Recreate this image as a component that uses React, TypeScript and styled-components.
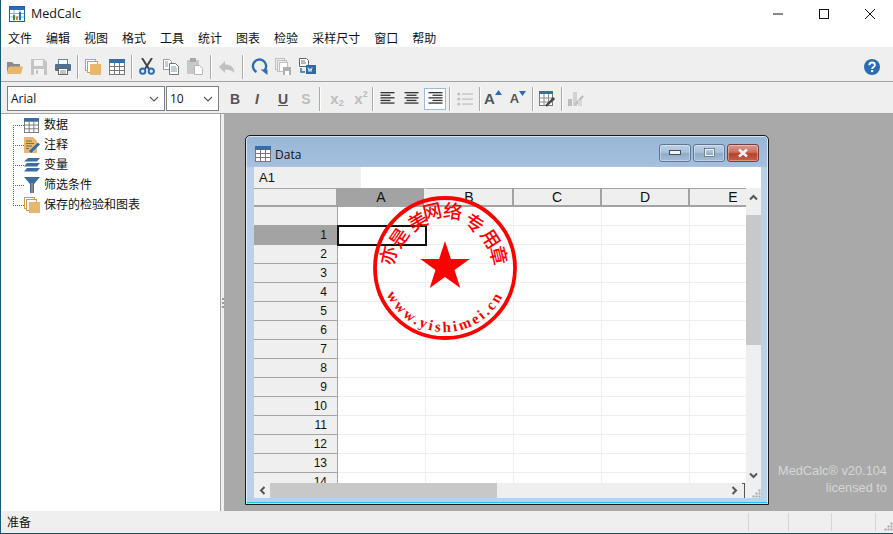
import React from 'react';
import styled, { createGlobalStyle } from 'styled-components';

const GlobalStyle = createGlobalStyle`
  html, body { margin: 0; padding: 0; background: #fff; overflow: hidden; }
  #root { width: 893px; height: 534px; }
  * { box-sizing: border-box; }
`;

const cjk = `"Noto Sans CJK SC", "Noto Sans", sans-serif`;
const arial = `"Liberation Sans", Arial, sans-serif`;

const Shell = styled.div`
  width: 893px;
  height: 534px;
  display: flex;
  flex-direction: column;
  border-left: 1px solid #1c5878;
  border-bottom: 1px solid #1c4a66;
  background: #fff;
  overflow: hidden;
`;

const TitleBar = styled.div`
  height: 27px;
  flex: none;
  display: flex;
  align-items: center;
  padding-left: 8px;
  background: #fff;
`;

const AppTitle = styled.span`
  margin-left: 6px;
  font: 12.5px "Open Sans", sans-serif;
  color: #111;
  flex: 1;
`;

const WinControl = styled.div`
  width: 46px;
  height: 27px;
  display: flex;
  align-items: center;
  justify-content: center;
`;

const MenuBar = styled.div`
  height: 20px;
  flex: none;
  display: flex;
  background: #fff;
`;

const MenuItem = styled.span`
  padding: 0 7px;
  font: 12px/21px ${cjk};
  color: #111;
`;

const Toolbar = styled.div<{ $h: number; $top: number }>`
  height: ${(p) => p.$h}px;
  flex: none;
  display: flex;
  align-items: center;
  background: #efefef;
  border-bottom: 1px solid #a3a3a3;
  padding: ${(p) => p.$top}px 0 0 2px;
`;

const ToolBtn = styled.div<{ $w?: number; $ml?: number; $active?: boolean }>`
  width: ${(p) => p.$w ?? 24}px;
  margin-left: ${(p) => p.$ml ?? 0}px;
  height: 22px;
  flex: none;
  display: flex;
  align-items: center;
  justify-content: center;
  background: ${(p) => (p.$active ? '#fff' : 'transparent')};
  border: ${(p) => (p.$active ? '1px solid #9dbbd8' : 'none')};
`;

const Sep = styled.div<{ $w?: number }>`
  width: ${(p) => p.$w ?? 6}px;
  flex: none;
  height: 24px;
  display: flex;
  justify-content: center;
  &::before {
    content: '';
    width: 2px;
    height: 100%;
    background: linear-gradient(90deg, #a9a9a9 50%, #fff 50%);
  }
`;

const HelpWrap = styled.div`
  margin-left: auto;
  margin-right: 13px;
  display: flex;
`;

const Combo = styled.div<{ $w: number; $ml?: number }>`
  width: ${(p) => p.$w}px;
  height: 25px;
  flex: none;
  margin: 0 1px 0 ${(p) => p.$ml ?? 0}px;
  background: #fff;
  border: 1px solid #7e7e7e;
  display: flex;
  align-items: center;
  justify-content: space-between;
  padding: 0 5px 0 3px;
  font: 12px "Open Sans", sans-serif;
  color: #111;
`;

const FormatGlyph = styled.span<{ $c?: string; $italic?: boolean; $under?: boolean; $size?: number }>`
  font: ${(p) => (p.$italic ? 'italic ' : '')}bold ${(p) => p.$size ?? 14}px ${arial};
  color: ${(p) => p.$c ?? '#555'};
  text-decoration: ${(p) => (p.$under ? 'underline' : 'none')};
  display: inline-flex;
  align-items: flex-start;
`;

const Script = styled.span<{ $up?: boolean }>`
  font: bold 9px ${arial};
  color: #bdbdbd;
  margin-top: ${(p) => (p.$up ? -1 : 8)}px;
`;

const Body = styled.div`
  flex: 1;
  min-height: 0;
  display: flex;
`;

const Sidebar = styled.div`
  width: 219px;
  flex: none;
  background: #fff;
  padding: 0 0 0 23px;
  display: flex;
  flex-direction: column;
`;

const TreeList = styled.div`
  margin-top: 1px;
`;

const TreeRow = styled.div<{ $first?: boolean }>`
  position: relative;
  height: 20px;
  display: flex;
  align-items: center;
  gap: 4px;
  font: 12px/18px ${cjk};
  color: #111;
  & > svg {
    flex: none;
  }
  &::before {
    content: '';
    position: absolute;
    left: -11px;
    top: ${(p) => (p.$first ? 10 : -10)}px;
    bottom: 9px;
    width: 10px;
    border-left: 1px dotted #666;
    border-bottom: 1px dotted #666;
  }
`;

const TreeLabel = styled.span<{ $ml?: number }>`
  margin: -2px 0 0 ${(p) => p.$ml ?? 0}px;
`;

const Splitter = styled.div`
  width: 4px;
  flex: none;
  background: #efefef;
  border-left: 1px solid #a3a3a3;
  display: flex;
  align-items: center;
  justify-content: center;
  &::before {
    content: '';
    width: 2px;
    height: 12px;
    margin-top: -18px;
    background: repeating-linear-gradient(180deg, #999 0 2px, transparent 2px 4px);
  }
`;

const Desktop = styled.div`
  flex: 1;
  position: relative;
  background: #a9a9a9;
  display: flex;
  flex-direction: column;
  align-items: flex-end;
  justify-content: flex-end;
  padding: 0 6px 15px 0;
`;

const Watermark = styled.div`
  font: 12.8px/17px ${arial};
  color: #d6d6d6;
  text-align: right;
`;

const ChildWindow = styled.div`
  position: absolute;
  left: 21px;
  top: 21px;
  width: 524px;
  height: 370px;
  border: 1px solid #1a1a1a;
  border-radius: 5px 5px 0 0;
  box-shadow: inset 0 0 0 1px rgba(255, 255, 255, 0.6), inset 0 -2px 0 #22c4e6;
  background: linear-gradient(180deg, #9ab6d6 0, #a5c0de 30px, #b9d1ea 32px);
  padding: 0 7px 0 8px;
  display: flex;
  flex-direction: column;
`;

const ChildTitle = styled.div`
  height: 31px;
  flex: none;
  display: flex;
  align-items: center;
  gap: 4px;
  padding: 5px 0 0 1px;
  font: 12px "Open Sans", sans-serif;
  color: #111;
`;

const CaptionButtons = styled.div`
  margin-left: auto;
  margin-top: -3px;
  margin-right: 2px;
  display: flex;
  gap: 2px;
`;

const CaptionBtn = styled.div<{ $close?: boolean; $w: number }>`
  width: ${(p) => p.$w}px;
  height: 18px;
  border-radius: 3px;
  border: 1px solid ${(p) => (p.$close ? '#7c3a44' : '#5f7690')};
  background: ${(p) =>
    p.$close
      ? 'linear-gradient(180deg, #d99a8c 0, #c9705f 45%, #b8402c 55%, #c4604c 100%)'
      : 'linear-gradient(180deg, #bcd0e6 0, #a9c1dc 45%, #8fabc9 55%, #a5bdd8 100%)'};
  box-shadow: inset 0 0 0 1px rgba(255, 255, 255, 0.35);
  display: flex;
  align-items: center;
  justify-content: center;
`;

const FormulaBar = styled.div`
  height: 21px;
  flex: none;
  display: flex;
  background: #fff;
`;

const CellName = styled.div`
  width: 107px;
  background: #efefef;
  padding-left: 5px;
  font: 13px/21px ${arial};
  color: #111;
`;

const Sheet = styled.div`
  flex: none;
  height: 295px;
  display: flex;
  background: #fff;
`;

const GridClip = styled.div`
  width: 492px;
  height: 295px;
  overflow: hidden;
`;

const CellGrid = styled.div`
  display: grid;
  grid-template-columns: 84px repeat(5, 88px);
  grid-auto-rows: 19px;
  width: 524px;
`;

const ColHead = styled.div<{ $sel?: boolean }>`
  background: ${(p) => (p.$sel ? '#a3a3a3' : '#efefef')};
  border-top: 1px solid #a3a3a3;
  border-bottom: 2px solid #a3a3a3;
  border-right: 2px solid ${(p) => (p.$sel ? '#efefef' : '#a3a3a3')};
  font: 14px/17px ${arial};
  text-align: center;
  color: #111;
`;

const RowHead = styled.div<{ $sel?: boolean }>`
  background: ${(p) => (p.$sel ? '#a3a3a3' : '#efefef')};
  border-bottom: 1px solid #a3a3a3;
  border-right: 1px solid #a3a3a3;
  font: 12px/19px ${arial};
  text-align: right;
  padding-right: 10px;
  color: #111;
`;

const Cell = styled.div<{ $active?: boolean }>`
  background: #fff;
  border-right: 1px solid #eeeeee;
  border-bottom: 1px solid #eeeeee;
  outline: ${(p) => (p.$active ? '2px solid #111' : 'none')};
  outline-offset: -1px;
  position: relative;
  z-index: ${(p) => (p.$active ? 1 : 'auto')};
`;

const VScroll = styled.div`
  width: 15px;
  height: 295px;
  flex: none;
  background: #efefef;
  display: flex;
  flex-direction: column;
`;

const VThumb = styled.div`
  height: 130px;
  margin-top: 8px;
  background: #c8c8c8;
`;

const ArrowBox = styled.div<{ $h?: number; $w?: number }>`
  width: ${(p) => p.$w ?? 15}px;
  height: ${(p) => p.$h ?? 19}px;
  flex: none;
  display: flex;
  align-items: center;
  justify-content: center;
`;

const Spring = styled.div`
  flex: 1;
`;

const HScroll = styled.div`
  height: 15px;
  flex: none;
  display: flex;
  background: #efefef;
`;

const HThumb = styled.div`
  width: 227px;
  flex: none;
  background: #c8c8c8;
`;

const SizeTick = styled.div`
  width: 3px;
  flex: none;
  margin: 0 1px 0 0;
  border-top: 1px solid #555;
  border-right: 1px solid #555;
`;

const Grip = styled.div`
  width: 15px;
  flex: none;
  display: flex;
  align-items: flex-end;
  justify-content: flex-end;
`;

const StatusBar = styled.div`
  height: 22px;
  flex: none;
  display: flex;
  align-items: stretch;
  background: #efefef;
  font: 12px ${cjk};
  color: #111;
`;

const StatusText = styled.div`
  flex: 1;
  padding-left: 6px;
  line-height: 22px;
`;

const StatusPane = styled.div<{ $w: number }>`
  width: ${(p) => p.$w}px;
  flex: none;
  margin: 2px 0;
  border-left: 1px solid #d4d4d4;
  display: flex;
  align-items: flex-end;
  justify-content: flex-end;
`;

const SealLayer = styled.svg`
  position: absolute;
  left: 124px;
  top: 57px;
  z-index: 5;
  pointer-events: none;
`;

/* ---- icons ---- */

const GripDots = () => (
  <svg width="9" height="9" viewBox="0 0 9 9" fill="#a8a8a8">
    <rect x="6.5" y="0.5" width="2" height="2" />
    <rect x="3.5" y="3.5" width="2" height="2" />
    <rect x="6.5" y="3.5" width="2" height="2" />
    <rect x="0.5" y="6.5" width="2" height="2" />
    <rect x="3.5" y="6.5" width="2" height="2" />
    <rect x="6.5" y="6.5" width="2" height="2" />
  </svg>
);

const Chevron = ({ dir }: { dir: 'up' | 'down' | 'left' | 'right' }) => {
  const rot = { up: 0, right: 90, down: 180, left: 270 }[dir];
  return (
    <svg width="9" height="9" viewBox="0 0 9 9">
      <path d="M1 6.5 4.5 3 8 6.5" fill="none" stroke="#555" strokeWidth="2" transform={`rotate(${rot} 4.5 4.5)`} />
    </svg>
  );
};

const ComboArrow = () => (
  <svg width="10" height="6" viewBox="0 0 10 6">
    <path d="M1 1 5 5 9 1" fill="none" stroke="#555" strokeWidth="1.1" />
  </svg>
);

const AppIcon = () => (
  <svg width="16" height="16" viewBox="0 0 16 16">
    <rect x="0.5" y="0.5" width="15" height="15" fill="#fff" stroke="#1d5fa8" />
    <rect x="1" y="1" width="14" height="3" fill="#2a6db5" />
    <path d="M1 7.5h14M1 11h14M5 4v11M11 4v11" stroke="#8fb4dc" />
    <rect x="4" y="9" width="2" height="5" fill="#2f8f3a" />
    <rect x="7" y="10.5" width="2" height="3.5" fill="#d9822b" />
    <rect x="10" y="6" width="2" height="8" fill="#2a6db5" />
  </svg>
);

const TableIcon = ({ size = 16 }: { size?: number }) => (
  <svg width={size} height={size} viewBox="0 0 16 16">
    <rect x="0.5" y="0.5" width="15" height="15" fill="#fff" stroke="#777" />
    <rect x="0" y="0" width="16" height="4" fill="#3d6da0" />
    <path d="M0 7.5h16M0 11.5h16M5.5 4v12M10.5 4v12" stroke="#777" />
  </svg>
);

const FolderIcon = () => (
  <svg width="16" height="16" viewBox="0 0 16 16">
    <path d="M0 3h5l2 2h6v3H2L0 14z" fill="#8a8a8a" />
    <path d="M0 15 2.5 7.5H16L14 15z" fill="#e9b66d" />
  </svg>
);

const SaveIcon = () => (
  <svg width="16" height="16" viewBox="0 0 16 16">
    <path d="M0 0h13l3 3v13H0z" fill="#c4c4c4" />
    <rect x="3" y="1" width="9" height="6" fill="#f3f3f3" />
    <rect x="3" y="10" width="10" height="6" fill="#f3f3f3" />
    <rect x="5" y="11" width="2" height="4" fill="#c4c4c4" />
  </svg>
);

const PrintIcon = () => (
  <svg width="16" height="16" viewBox="0 0 16 16">
    <rect x="3.5" y="0.5" width="9" height="5" fill="#fff" stroke="#5f88b5" />
    <rect x="0" y="5" width="16" height="7" rx="1" fill="#4f6f94" />
    <rect x="3.5" y="9.5" width="9" height="6" fill="#fff" stroke="#666" />
    <path d="M5 12h6M5 14h6" stroke="#888" />
  </svg>
);

const SheetsIcon = () => (
  <svg width="16" height="16" viewBox="0 0 16 16">
    <rect x="0.5" y="0.5" width="10" height="11" fill="#fff" stroke="#d89a45" />
    <rect x="2.5" y="2.5" width="10" height="11" fill="#fff" stroke="#d89a45" />
    <rect x="5" y="5" width="11" height="11" fill="#e9b66d" />
  </svg>
);

const ScissorsIcon = () => (
  <svg width="16" height="17" viewBox="0 0 16 17">
    <path d="M3 0 10 11M13 0 6 11" stroke="#444" strokeWidth="2" />
    <circle cx="3.7" cy="13.2" r="2.6" fill="none" stroke="#2a6db5" strokeWidth="2" />
    <circle cx="12.3" cy="13.2" r="2.6" fill="none" stroke="#2a6db5" strokeWidth="2" />
  </svg>
);

const CopyIcon = () => (
  <svg width="16" height="16" viewBox="0 0 16 16">
    <path d="M.5.5h6l2 2v8h-8z" fill="#fff" stroke="#999" />
    <path d="M6.5 4.5h6l3 3v8h-9z" fill="#fff" stroke="#777" />
    <path d="M2 3h3M2 5h3M2 7h3M8 8h5M8 10h6M8 12h6" stroke="#7d9cc0" />
  </svg>
);

const PasteIcon = () => (
  <svg width="16" height="17" viewBox="0 0 16 17">
    <rect x="0" y="2" width="12" height="14" fill="#c8c8c8" />
    <rect x="3" y="0" width="6" height="4" fill="#a8a8a8" />
    <path d="M7.5 7.5h5l3 3v6h-8z" fill="#fff" stroke="#b4b4b4" />
  </svg>
);

const UndoIcon = () => (
  <svg width="16" height="14" viewBox="0 0 16 14">
    <path d="M0 7 6 1v3.5c5 0 9 2 9.5 8.5C13 10 10 9.5 6 9.5V13z" fill="#c0c0c0" />
  </svg>
);

const RefreshIcon = () => (
  <svg width="17" height="17" viewBox="0 0 17 17">
    <path d="M5.5 14A6.6 6.6 0 1 1 13.5 12.5" fill="none" stroke="#2a6db5" strokeWidth="2.4" />
    <path d="M9.5 11.5h7v5.5z" fill="#2a6db5" />
  </svg>
);

const DocsSaveIcon = () => (
  <svg width="16" height="17" viewBox="0 0 16 17">
    <rect x="0.5" y="0.5" width="9" height="11" fill="#eee" stroke="#c0c0c0" />
    <rect x="2.5" y="2.5" width="9" height="11" fill="#eee" stroke="#c0c0c0" />
    <rect x="4.5" y="4.5" width="8" height="9" fill="#fff" stroke="#c0c0c0" />
    <path d="M8 9h8v8H8z" fill="#b0b0b0" />
    <rect x="10" y="13" width="4" height="4" fill="#fff" />
  </svg>
);

const ExportIcon = () => (
  <svg width="17" height="17" viewBox="0 0 17 17">
    <path d="M.5.5h7l2 2v6h-9z" fill="#fff" stroke="#666" />
    <path d="M2 3h4M2 5h5" stroke="#777" />
    <rect x="7" y="7" width="10" height="9" fill="#2f6aa8" />
    <path d="M9 9.5l1 4 1-3 1 3 1-4" stroke="#fff" fill="none" strokeWidth="0.8" />
    <path d="M2 10v4h4" stroke="#2f6aa8" fill="none" strokeWidth="1.4" />
  </svg>
);

const HelpIcon = () => (
  <svg width="16" height="16" viewBox="0 0 16 16">
    <circle cx="8" cy="8" r="8" fill="#2a6db5" />
    <path d="M5.3 6.2C5.4 4.4 6.6 3.5 8.1 3.5s2.8 1 2.8 2.4c0 2.2-2.7 2.2-2.7 4.2" fill="none" stroke="#fff" strokeWidth="1.9" />
    <rect x="7.1" y="11" width="2.1" height="2.1" fill="#fff" />
  </svg>
);

const AlignIcon = ({ mode }: { mode: 'left' | 'center' | 'right' }) => {
  const rows = [14, 10, 14, 10, 14];
  return (
    <svg width="15" height="13" viewBox="0 0 15 13">
      {rows.map((w, i) => {
        const x = mode === 'left' ? 0.5 : mode === 'right' ? 14.5 - w : 7.5 - w / 2;
        return <rect key={i} x={x} y={i * 2.6} width={w} height="1.3" fill="#333" />;
      })}
    </svg>
  );
};

const ListIcon = () => (
  <svg width="16" height="14" viewBox="0 0 16 14" fill="#c2c2c2">
    <circle cx="1.8" cy="2" r="1.6" />
    <circle cx="1.8" cy="7" r="1.6" />
    <circle cx="1.8" cy="12" r="1.6" />
    <rect x="5" y="1.4" width="11" height="1.3" />
    <rect x="5" y="6.4" width="11" height="1.3" />
    <rect x="5" y="11.4" width="11" height="1.3" />
  </svg>
);

const TriMark = ({ down }: { down?: boolean }) => (
  <svg width="7" height="5" viewBox="0 0 7 5">
    <path d={down ? 'M0 0h7L3.5 5z' : 'M3.5 0 7 5H0z'} fill="#2a6db5" />
  </svg>
);

const TableEditIcon = () => (
  <svg width="16" height="16" viewBox="0 0 16 16">
    <rect x="0.5" y="0.5" width="13" height="14" fill="#fff" stroke="#777" />
    <rect x="0" y="0" width="14" height="3" fill="#3d6da0" />
    <path d="M0 7h14M0 11h14M5 3v12M9.5 3v12" stroke="#888" />
    <path d="M15 7 7 15" stroke="#444" strokeWidth="2.4" />
    <circle cx="14" cy="8" r="1.6" fill="#444" />
  </svg>
);

const ChartEditIcon = () => (
  <svg width="16" height="16" viewBox="0 0 16 16">
    <rect x="0" y="8" width="4" height="7" fill="#bcbcbc" />
    <rect x="5" y="1" width="4" height="14" fill="#d2d2d2" />
    <path d="M15 5 7 14" stroke="#bdbdbd" strokeWidth="2.4" />
    <rect x="10" y="9" width="4" height="6" fill="#d8d8d8" />
  </svg>
);

const NotesIcon = () => (
  <svg width="16" height="16" viewBox="0 0 16 16">
    <path d="M0 0h9l4 4v12H0z" fill="#e9b66d" />
    <path d="M2 4h6M2 6.5h8M2 9h6M2 11.5h3" stroke="#6b6b6b" />
    <path d="M15 6.5 6 15" stroke="#2a6db5" strokeWidth="3" />
  </svg>
);

const LayersIcon = () => (
  <svg width="16" height="14" viewBox="0 0 16 14" fill="#3d6da0">
    <path d="M4 0h12l-3 3.6H0z" />
    <path d="M3 5h13l-3 3.6H0z" />
    <path d="M3 10h13l-3 3.6H0z" />
  </svg>
);

const FunnelIcon = () => (
  <svg width="16" height="16" viewBox="0 0 16 16">
    <path d="M0 0h16L10 7v9H6V7z" fill="#3d6da0" />
    <path d="M8 6v10" stroke="#8a8a8a" strokeWidth="2" />
  </svg>
);

/* ---- seal ---- */

const sealCenter = 75;
const sealChars: [string, number, number][] = [
  ['亦', 17, 62],
  ['是', 28, 44],
  ['美', 47, 27],
  ['网', 62, 17],
  ['络', 83, 17],
  ['专', 105, 29],
  ['用', 122, 45],
  ['章', 130, 62],
];

const Seal = () => {
  const star = Array.from({ length: 10 }, (_, i) => {
    const r = i % 2 === 0 ? 26 : 10;
    const a = (Math.PI / 5) * i - Math.PI / 2;
    return `${sealCenter + r * Math.cos(a)},${sealCenter - 1 + r * Math.sin(a)}`;
  }).join(' ');
  return (
    <SealLayer width="150" height="150" viewBox="0 0 150 150">
      <circle cx={sealCenter} cy={sealCenter} r="70" fill="none" stroke="#f00" strokeWidth="3.8" />
      <polygon points={star} fill="#f00" />
      {sealChars.map(([ch, x, y]) => {
        const angle = (Math.atan2(x - sealCenter, sealCenter - y) * 180) / Math.PI;
        return (
          <text
            key={ch}
            x={x}
            y={y}
            fill="#f00"
            fontSize="19"
            fontWeight="500"
            fontFamily='"Noto Sans CJK SC", sans-serif'
            textAnchor="middle"
            dominantBaseline="central"
            transform={`rotate(${angle} ${x} ${y})`}
          >
            {ch}
          </text>
        );
      })}
      <path id="sealArc" d="M11 75A64 64 0 0 0 139 75" fill="none" />
      <text fill="#f00" fontSize="15" fontWeight="700" fontFamily='"Liberation Serif", serif' letterSpacing="2.6">
        <textPath href="#sealArc" startOffset="50%" textAnchor="middle">
          www.yishimei.cn
        </textPath>
      </text>
    </SealLayer>
  );
};

const MENUS = ['文件', '编辑', '视图', '格式', '工具', '统计', '图表', '检验', '采样尺寸', '窗口', '帮助'];
const COLUMNS = ['A', 'B', 'C', 'D', 'E'];
const ROWS = Array.from({ length: 14 }, (_, i) => i + 1);

const App = () => (
  <Shell>
    <GlobalStyle />
    <TitleBar>
      <AppIcon />
      <AppTitle>MedCalc</AppTitle>
      <WinControl>
        <svg width="10" height="10" viewBox="0 0 10 10">
          <path d="M0 5h10" stroke="#111" />
        </svg>
      </WinControl>
      <WinControl>
        <svg width="10" height="10" viewBox="0 0 10 10">
          <rect x="0.5" y="0.5" width="9" height="9" fill="none" stroke="#111" />
        </svg>
      </WinControl>
      <WinControl>
        <svg width="10" height="10" viewBox="0 0 10 10">
          <path d="M0 0 10 10M10 0 0 10" stroke="#111" />
        </svg>
      </WinControl>
    </TitleBar>
    <MenuBar>
      {MENUS.map((m) => (
        <MenuItem key={m}>{m}</MenuItem>
      ))}
    </MenuBar>
    <Toolbar $h={35} $top={5}>
      <ToolBtn><FolderIcon /></ToolBtn>
      <ToolBtn><SaveIcon /></ToolBtn>
      <ToolBtn><PrintIcon /></ToolBtn>
      <Sep />
      <ToolBtn><SheetsIcon /></ToolBtn>
      <ToolBtn><TableIcon /></ToolBtn>
      <Sep />
      <ToolBtn><ScissorsIcon /></ToolBtn>
      <ToolBtn><CopyIcon /></ToolBtn>
      <ToolBtn><PasteIcon /></ToolBtn>
      <Sep $w={8} />
      <ToolBtn><UndoIcon /></ToolBtn>
      <Sep $w={8} />
      <ToolBtn><RefreshIcon /></ToolBtn>
      <ToolBtn><DocsSaveIcon /></ToolBtn>
      <ToolBtn><ExportIcon /></ToolBtn>
      <HelpWrap><HelpIcon /></HelpWrap>
    </Toolbar>
    <Toolbar $h={32} $top={2}>
      <Combo $w={158} $ml={4}>
        Arial
        <ComboArrow />
      </Combo>
      <Combo $w={53}>
        10
        <ComboArrow />
      </Combo>
      <ToolBtn $w={22} $ml={4}><FormatGlyph>B</FormatGlyph></ToolBtn>
      <ToolBtn $w={22}><FormatGlyph $italic>I</FormatGlyph></ToolBtn>
      <ToolBtn $w={30}><FormatGlyph $under>U</FormatGlyph></ToolBtn>
      <ToolBtn $w={16}><FormatGlyph $c="#bdbdbd">S</FormatGlyph></ToolBtn>
      <Sep $w={12} />
      <ToolBtn $w={22}><FormatGlyph $c="#bdbdbd" $size={15}>x<Script>2</Script></FormatGlyph></ToolBtn>
      <ToolBtn $w={22} $ml={2}><FormatGlyph $c="#bdbdbd" $size={15}>x<Script $up>2</Script></FormatGlyph></ToolBtn>
      <Sep $w={2} />
      <ToolBtn $w={22} $ml={2}><AlignIcon mode="left" /></ToolBtn>
      <ToolBtn $w={22} $ml={2}><AlignIcon mode="center" /></ToolBtn>
      <ToolBtn $w={22} $ml={2} $active><AlignIcon mode="right" /></ToolBtn>
      <Sep $w={8} />
      <ToolBtn $w={22}><ListIcon /></ToolBtn>
      <Sep $w={8} />
      <ToolBtn $w={18}><FormatGlyph $size={15}>A<TriMark /></FormatGlyph></ToolBtn>
      <ToolBtn $w={22} $ml={5}><FormatGlyph $size={13}>A<TriMark down /></FormatGlyph></ToolBtn>
      <Sep $w={8} />
      <ToolBtn $w={20}><TableEditIcon /></ToolBtn>
      <Sep $w={10} />
      <ToolBtn $w={18}><ChartEditIcon /></ToolBtn>
    </Toolbar>
    <Body>
      <Sidebar>
        <TreeList>
          <TreeRow $first><TableIcon size={15} /><TreeLabel $ml={1}>数据</TreeLabel></TreeRow>
          <TreeRow><NotesIcon /><TreeLabel>注释</TreeLabel></TreeRow>
          <TreeRow><LayersIcon /><TreeLabel>变量</TreeLabel></TreeRow>
          <TreeRow><FunnelIcon /><TreeLabel>筛选条件</TreeLabel></TreeRow>
          <TreeRow><SheetsIcon /><TreeLabel>保存的检验和图表</TreeLabel></TreeRow>
        </TreeList>
      </Sidebar>
      <Splitter />
      <Desktop>
        <Watermark>
          MedCalc® v20.104
          <br />
          licensed to
        </Watermark>
        <ChildWindow>
          <ChildTitle>
            <TableIcon />
            Data
            <CaptionButtons>
              <CaptionBtn $w={32}>
                <svg width="12" height="5" viewBox="0 0 12 5">
                  <rect x="0.5" y="0.5" width="11" height="4" fill="#eef3f8" stroke="#44505e" />
                </svg>
              </CaptionBtn>
              <CaptionBtn $w={32}>
                <svg width="11" height="9" viewBox="0 0 11 9">
                  <rect x="1" y="1" width="9" height="7" fill="none" stroke="#eef3f8" strokeWidth="2" />
                  <rect x="0.5" y="0.5" width="10" height="8" fill="none" stroke="#44505e" strokeWidth="0.7" />
                </svg>
              </CaptionBtn>
              <CaptionBtn $w={32} $close>
                <svg width="12" height="10" viewBox="0 0 12 10">
                  <path d="M2 1.5 10 8.5M10 1.5 2 8.5" stroke="#f4f4f4" strokeWidth="2.6" />
                </svg>
              </CaptionBtn>
            </CaptionButtons>
          </ChildTitle>
          <FormulaBar>
            <CellName>A1</CellName>
          </FormulaBar>
          <Sheet>
            <GridClip>
              <CellGrid>
                <ColHead />
                {COLUMNS.map((c, i) => (
                  <ColHead key={c} $sel={i === 0}>{c}</ColHead>
                ))}
                <RowHead />
                {COLUMNS.map((c) => (
                  <Cell key={c} />
                ))}
                {ROWS.map((r) => (
                  <React.Fragment key={r}>
                    <RowHead $sel={r === 1}>{r}</RowHead>
                    {COLUMNS.map((c, i) => (
                      <Cell key={c} $active={r === 1 && i === 0} />
                    ))}
                  </React.Fragment>
                ))}
              </CellGrid>
            </GridClip>
            <VScroll>
              <ArrowBox $h={19}><Chevron dir="up" /></ArrowBox>
              <VThumb />
              <Spring />
              <ArrowBox $h={15}><Chevron dir="down" /></ArrowBox>
            </VScroll>
          </Sheet>
          <HScroll>
            <ArrowBox $w={16} $h={15}><Chevron dir="left" /></ArrowBox>
            <HThumb />
            <Spring />
            <ArrowBox $w={15} $h={15}><Chevron dir="right" /></ArrowBox>
            <SizeTick />
            <Grip><GripDots /></Grip>
          </HScroll>
          <Seal />
        </ChildWindow>
      </Desktop>
    </Body>
    <StatusBar>
      <StatusText>准备</StatusText>
      <StatusPane $w={40} />
      <StatusPane $w={43} />
      <StatusPane $w={44} />
      <StatusPane $w={18}><GripDots /></StatusPane>
    </StatusBar>
  </Shell>
);

export default App;
